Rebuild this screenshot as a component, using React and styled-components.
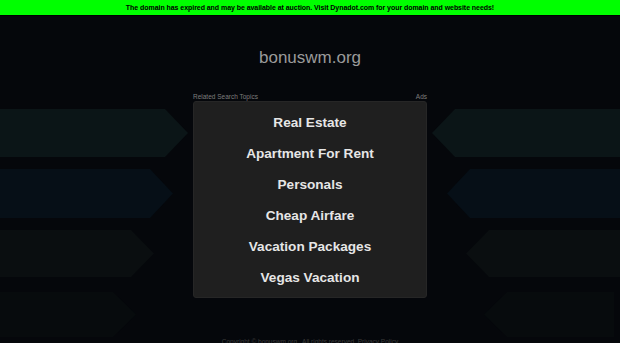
import React from "react";
import styled, { createGlobalStyle } from "styled-components";

const topics = [
	"Real Estate",
	"Apartment For Rent",
	"Personals",
	"Cheap Airfare",
	"Vacation Packages",
	"Vegas Vacation",
];

const arrows = [
	{ width: 188, height: 48, color: "#0b1517" },
	{ width: 173, height: 49, color: "#060f17" },
	{ width: 154, height: 47, color: "#0a0e10" },
	{ width: 136, height: 45, color: "#070b0d" },
];

const GlobalStyle = createGlobalStyle`
	html, body {
		margin: 0;
		padding: 0;
		background: #05070b;
		font-family: "Liberation Sans", Arial, sans-serif;
		overflow: hidden;
	}
`;

const Page = styled.div`
	width: 620px;
	height: 343px;
	overflow: hidden;
	background: #05070b;
`;

const Notice = styled.div`
	height: 15px;
	line-height: 15px;
	background: #00ff00;
	border-bottom: 1px solid #000;
	text-align: center;
	font-size: 7px;
	font-weight: bold;
	color: #000;
	letter-spacing: -0.05px;
`;

const Title = styled.h1`
	margin: 32px 0 0;
	height: 20px;
	line-height: 20px;
	text-align: center;
	font-size: 17px;
	font-weight: normal;
	color: #9a9a9a;
`;

const Main = styled.div`
	display: grid;
	grid-template-columns: 193px 234px 1fr;
	margin-top: 24px;
`;

const Side = styled.div`
	display: flex;
	flex-direction: column;
	align-items: ${(p) => (p.$right ? "flex-end" : "flex-start")};
	padding-top: 17px;
	gap: 12px;
`;

const Arrow = styled.div`
	width: ${(p) => p.$width}px;
	height: ${(p) => p.$height}px;
	background: ${(p) => p.$color};
	clip-path: ${(p) =>
		p.$right
			? "polygon(23px 0, 100% 0, 100% 100%, 23px 100%, 0 50%)"
			: "polygon(0 0, calc(100% - 23px) 0, 100% 50%, calc(100% - 23px) 100%, 0 100%)"};
	margin-right: ${(p) => (p.$right && p.$last ? "6px" : "0")};
	margin-top: ${(p) => (p.$last ? "3px" : "0")};
`;

const Center = styled.div`
	display: flex;
	flex-direction: column;
`;

const Labels = styled.div`
	display: flex;
	justify-content: space-between;
	height: 9px;
	line-height: 9px;
	font-size: 6.5px;
	color: #7d7d7d;
`;

const Box = styled.ul`
	list-style: none;
	margin: 0;
	padding: 5px 0 6px;
	height: 197px;
	box-sizing: border-box;
	background: #1f1f1f;
	border: 1px solid #262626;
	border-radius: 3px;
`;

const Topic = styled.li`
	height: 31px;
	line-height: 31px;
	text-align: center;
	font-size: 13.6px;
	font-weight: bold;
	color: #e6e6e6;
`;

const Footer = styled.div`
	text-align: center;
	font-size: 6.5px;
	line-height: 8px;
	color: #3a3a3a;
	padding-top: 1px;
`;

export default function App() {
	return (
		<Page>
			<GlobalStyle />
			<Notice>
				The domain has expired and may be available at auction. Visit Dynadot.com for your domain and website needs!
			</Notice>
			<Title>bonuswm.org</Title>
			<Main>
				<Side>
					{arrows.map((a, i) => (
						<Arrow key={i} $width={a.width} $height={a.height} $color={a.color} $last={i === 3} />
					))}
				</Side>
				<Center>
					<Labels>
						<span>Related Search Topics</span>
						<span>Ads</span>
					</Labels>
					<Box>
						{topics.map((t) => (
							<Topic key={t}>{t}</Topic>
						))}
					</Box>
				</Center>
				<Side $right>
					{arrows.map((a, i) => (
						<Arrow
							key={i}
							$right
							$width={i === 3 ? 130 : a.width}
							$height={a.height}
							$color={a.color}
							$last={i === 3}
						/>
					))}
				</Side>
			</Main>
			<Footer>Copyright © bonuswm.org . All rights reserved. Privacy Policy</Footer>
		</Page>
	);
}
